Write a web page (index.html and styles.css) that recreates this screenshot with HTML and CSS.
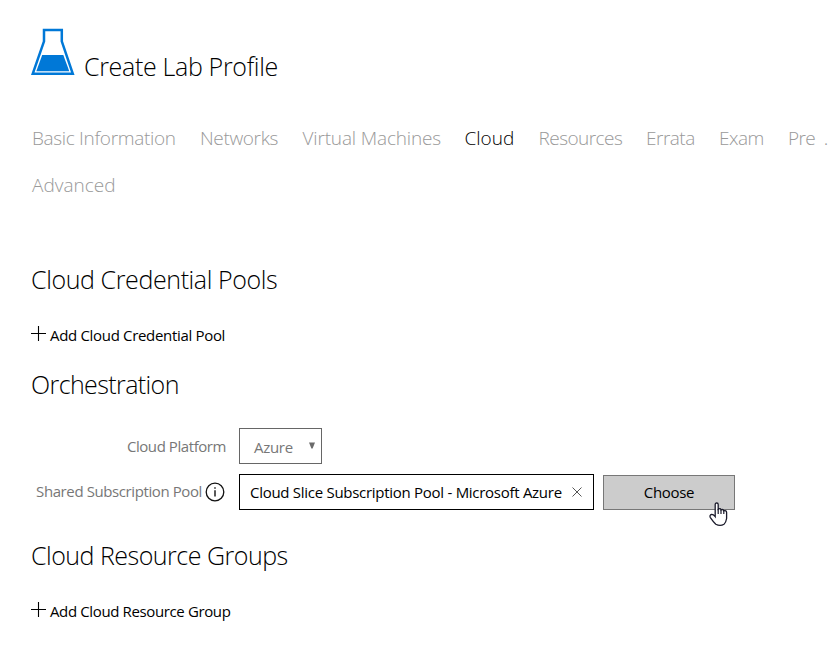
FILE: index.html
```html
<!DOCTYPE html>
<html lang="en">
<head>
<meta charset="utf-8">
<title>Create Lab Profile</title>
<link rel="stylesheet" href="styles.css">
</head>
<body>
<header class="page-header">
  <svg class="flask" width="44" height="48" viewBox="0 0 44 48">
    <path d="M13 2H30.8V13.3L41.8 45.8H1.7L13 13.3Z" fill="#fff" stroke="#0078d7" stroke-width="2.5"/>
    <path d="M11.2 27H32.3L38.3 43.3H5.3Z" fill="#0078d7"/>
  </svg>
  <h1 class="title">Create Lab Profile</h1>
</header>
<nav class="tabs">
  <a class="tab basic">Basic Information</a>
  <a class="tab networks">Networks</a>
  <a class="tab machines">Virtual Machines</a>
  <a class="tab cloud active">Cloud</a>
  <a class="tab resources">Resources</a>
  <a class="tab errata">Errata</a>
  <a class="tab exam">Exam</a>
  <a class="tab pre">Pre&nbsp; .</a>
  <a class="tab advanced">Advanced</a>
</nav>
<main>
  <h2 class="heading pools">Cloud Credential Pools</h2>
  <a class="add"><svg class="plus" width="15" height="15"><path d="M0 7.5H15M7.5 0V15"/></svg><span class="add-pool">Add Cloud Credential Pool</span></a>
  <h2 class="heading orchestration">Orchestration</h2>
  <div class="row platform-row">
    <label class="label platform-label">Cloud Platform</label>
    <div class="select"><span>Azure</span><svg class="arrow" width="6" height="7"><path d="M0 .5H6L3.6 6.5H2.4Z" fill="#6b6b6b"/></svg></div>
  </div>
  <div class="row pool-row">
    <label class="label"><span class="shared">Shared Subscription Pool</span><svg class="info" width="20" height="20"><circle cx="10" cy="10" r="8.8" fill="none" stroke="#111" stroke-width="1.3"/><path d="M9.3 5.2H10.7V6.8H9.3ZM9.3 8.2H10.7V14.5H9.3Z" fill="#111"/></svg></label>
    <div class="field"><span class="pool-value">Cloud Slice Subscription Pool - Microsoft Azure</span><svg class="clear" width="10" height="10"><path d="M.5 .5L9.5 9.5M9.5 .5L.5 9.5"/></svg></div>
    <button class="choose">Choose
      <svg class="pointer" width="19" height="25" viewBox="0 0 19 25"><path d="M6.2 14.6V2.6Q6.2 1 7.7 1T9.2 2.6V7.3Q11.6 5.8 12 7.9Q14.3 6.8 14.7 8.8Q17.6 8 17.6 10.6V16.5Q17 20.5 15 22.2Q11.2 24.7 6.8 22.2Q4 19.4 1.2 15.3Q.4 13.2 2.6 12.4Q4.3 12.3 6.2 14.6Z" fill="#fff" stroke="#1b1b2b" stroke-width="1.3"/><path d="M9.2 7V12M12 7.8V12M14.8 8.8V12" fill="none" stroke="#1b1b2b" stroke-width="1.2"/></svg>
    </button>
  </div>
  <h2 class="heading groups">Cloud Resource Groups</h2>
  <a class="add"><svg class="plus" width="15" height="15"><path d="M0 7.5H15M7.5 0V15"/></svg><span class="add-group">Add Cloud Resource Group</span></a>
</main>
</body>
</html>
```
FILE: styles.css
```css
* { box-sizing: border-box; }
body { margin: 0; padding: 28px 14px 0 31px; width: 840px; height: 659px; overflow: hidden; background: #fff; color: #000; font: 400 15px/20px "Open Sans", "Noto Sans", sans-serif; white-space: nowrap; }
.page-header { display: flex; height: 56px; }
.flask { flex: none; }
.title { margin: 20px 0 0 9px; font-size: 25px; line-height: 36px; font-weight: 300; letter-spacing: -.33px; }
.tabs { display: grid; grid-template-columns: 168px 102.5px 162px 74px 107.5px 73px 69px 39px; grid-auto-rows: 47px; margin-top: 31px; padding-left: 1px; }
.tab { font-size: 19px; line-height: 47px; font-weight: 300; color: #999; }
.tab.active { color: #000; }
.basic { letter-spacing: -.33px; }
.networks { letter-spacing: -.35px; }
.machines { letter-spacing: -.16px; }
.resources { letter-spacing: -.55px; }
.errata, .exam { letter-spacing: -.5px; }
.pre { letter-spacing: -.6px; }
.heading { margin: 0; font-size: 25px; line-height: 36px; font-weight: 300; }
.pools { margin-top: 52px; letter-spacing: -.39px; }
.add { display: flex; align-items: center; gap: 4px; height: 20px; }
.pools + .add, .groups + .add { margin-top: 28px; }
.add-pool { letter-spacing: -.32px; }
.add-group { letter-spacing: -.37px; }
.plus { margin-top: -4px; fill: none; stroke: #000; stroke-width: 1.1; }
.orchestration { margin-top: 21px; letter-spacing: -.6px; }
.row { display: flex; }
.label { display: flex; justify-content: flex-end; align-items: center; width: 195px; height: 36px; margin-right: 13px; color: #777; }
.platform-label { letter-spacing: -.43px; }
.platform-row { margin-top: 26px; }
.pool-row { margin-top: 10px; }
.shared { margin-top: -2px; letter-spacing: -.4px; }
.info { margin: 0 1px 0 3px; flex: none; }
.select { display: flex; align-items: center; justify-content: space-between; width: 83px; height: 36px; padding: 2px 6px 0 14px; border: 1px solid #666; color: #777; letter-spacing: -.3px; }
.arrow { margin-top: -4px; }
.field { display: flex; align-items: center; justify-content: space-between; width: 355px; height: 36px; padding: 0 11px 0 10px; border: 1px solid #000; }
.pool-value { letter-spacing: -.28px; }
.clear { fill: none; stroke: #555; stroke-width: 1; }
.choose { position: relative; width: 132px; height: 35px; margin: 1px 0 0 9px; padding: 0 0 2px; border: 1px solid #777; background: #ccc; color: #000; font: inherit; letter-spacing: -.3px; }
.pointer { position: absolute; left: 105px; top: 26px; }
.groups { margin-top: 27px; letter-spacing: -.5px; }
```
